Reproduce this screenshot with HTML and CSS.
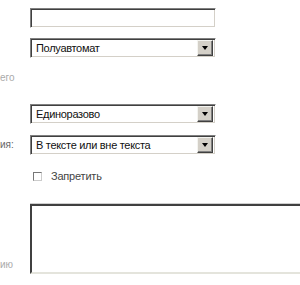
FILE: index.html
```html
<!DOCTYPE html>
<html lang="ru">
<head>
    <meta charset="UTF-8">
    <title>Настройки ссылки</title>
    <link rel="stylesheet" href="styles.css">
</head>
<body>
    <div class="form">
        <div class="row row-input">
            <div class="label"></div>
            <div class="field"><div class="input"></div></div>
        </div>

        <div class="row row-select1">
            <div class="label"></div>
            <div class="field">
                <div class="select">
                    <span class="select-text">Полуавтомат</span>
                    <span class="select-btn"><span class="arrow"></span></span>
                </div>
            </div>
        </div>

        <div class="row row-note">
            <div class="label light">его</div>
            <div class="field"></div>
        </div>

        <div class="row row-select2">
            <div class="label"></div>
            <div class="field">
                <div class="select">
                    <span class="select-text">Единоразово</span>
                    <span class="select-btn"><span class="arrow"></span></span>
                </div>
            </div>
        </div>

        <div class="row row-select3">
            <div class="label">ия:</div>
            <div class="field">
                <div class="select">
                    <span class="select-text">В тексте или вне текста</span>
                    <span class="select-btn"><span class="arrow"></span></span>
                </div>
            </div>
        </div>

        <div class="row row-check">
            <div class="label"></div>
            <div class="field">
                <label class="check"><span class="box"></span>Запретить</label>
            </div>
        </div>

        <div class="row row-area">
            <div class="label light bottom">ию</div>
            <div class="field"><div class="textarea"></div></div>
        </div>
    </div>
</body>
</html>
```

FILE: styles.css
```css
body {
    margin: 0;
    background: #ffffff;
    font-family: "Liberation Sans", Arial, sans-serif;
    font-size: 11px;
    color: #000;
}

.form {
    padding-top: 8px;
}

.row {
    display: grid;
    grid-template-columns: 30px 1fr;
}

.label {
    color: #666;
    font-size: 10px;
    line-height: 14px;
    white-space: nowrap;
    align-self: center;
}

.label.light {
    color: #aaa;
}

.label.bottom {
    align-self: end;
    padding-bottom: 2px;
}

/* поля */
.input,
.select {
    box-sizing: border-box;
    width: 186px;
    height: 20px;
    border: 1px solid;
    border-color: #808080 #ffffff #ffffff #808080;
    box-shadow: inset 1px 1px #404040, inset -1px -1px #d4d0c8;
    background: #fff;
}

.select {
    display: flex;
    align-items: center;
    padding: 2px 2px 2px 5px;
}

.select-text {
    flex: 1;
    line-height: 16px;
    color: #111;
    letter-spacing: -0.3px;
}

.select-btn {
    box-sizing: border-box;
    width: 16px;
    height: 16px;
    background: #d4d0c8;
    border: 1px solid;
    border-color: #f4f4f0 #404040 #404040 #f4f4f0;
    box-shadow: inset -1px -1px #808080;
    display: flex;
    justify-content: center;
    align-items: center;
}

.arrow {
    width: 0;
    height: 0;
    border-left: 3.5px solid transparent;
    border-right: 3.5px solid transparent;
    border-top: 4px solid #000;
}

.row-input { margin-bottom: 10px; }
.row-select1 { margin-bottom: 13px; }
.row-note { height: 14px; margin-bottom: 19px; }
.row-select2 { margin-bottom: 11px; }
.row-select3 { margin-bottom: 14px; }
.row-check { margin-bottom: 21px; }

.check {
    display: flex;
    align-items: center;
    height: 14px;
    padding-left: 3px;
    color: #444;
    font-size: 11px;
    letter-spacing: -0.2px;
}

.box {
    box-sizing: border-box;
    width: 9px;
    height: 9px;
    border: 1px solid;
    border-color: #777 #ccc #ccc #777;
    background: #fff;
    margin-right: 9px;
}

.textarea {
    box-sizing: border-box;
    width: 280px;
    height: 70px;
    border: 2px solid;
    border-color: #404040 #e4e4dc #e4e4dc #404040;
    box-shadow: 0 -1px #cfcfcf;
    background: #fff;
}
```
